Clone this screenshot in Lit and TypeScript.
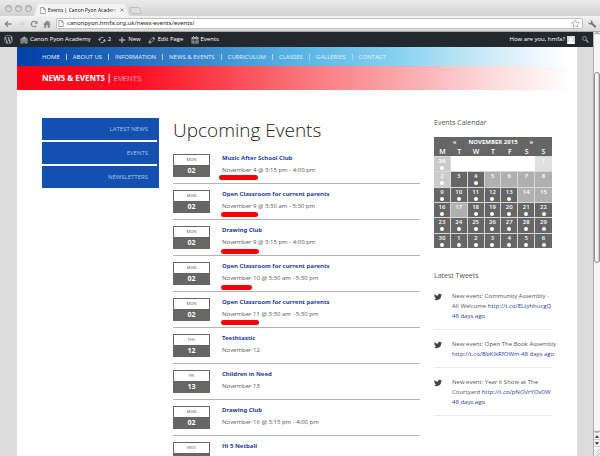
import { LitElement, html, css, svg } from "lit";
import { customElement } from "lit/decorators.js";
import { classMap } from "lit/directives/class-map.js";
import { styleMap } from "lit/directives/style-map.js";

interface Mark { x: number; y: number; w: number; }
interface EventItem { day: string; num?: string; title: string; when?: string; mark?: Mark; }

const NAV = ["HOME", "ABOUT US", "INFORMATION", "NEWS & EVENTS", "CURRICULUM", "CLASSES", "GALLERIES", "CONTACT"];
const SIDE = ["LATEST NEWS", "EVENTS", "NEWSLETTERS"];

const EVENTS: EventItem[] = [
  { day: "MON", num: "02", title: "Music After School Club", when: "November 4 @ 3:15 pm - 4:00 pm", mark: { x: 46, y: 27, w: 39 } },
  { day: "MON", num: "02", title: "Open Classroom for current parents", when: "November 9 @ 3:30 am - 5:30 pm", mark: { x: 48, y: 28, w: 37 } },
  { day: "MON", num: "02", title: "Drawing Club", when: "November 9 @ 3:15 pm - 4:00 pm", mark: { x: 48, y: 29, w: 38 } },
  { day: "MON", num: "02", title: "Open Classroom for current parents", when: "November 10 @ 3:30 am - 5:30 pm", mark: { x: 48, y: 29, w: 31 } },
  { day: "MON", num: "02", title: "Open Classroom for current parents", when: "November 11 @ 3:30 am - 5:30 pm", mark: { x: 48, y: 28, w: 38 } },
  { day: "THU", num: "12", title: "Teethtastic", when: "November 12" },
  { day: "FRI", num: "13", title: "Children in Need", when: "November 13" },
  { day: "MON", num: "02", title: "Drawing Club", when: "November 16 @ 3:15 pm - 4:00 pm" },
  { day: "WED", title: "Hi 5 Netball" },
];

// d: dark cell, m: mid grey, l: light grey, p: palest, w: blank; "*" marks a day with events
const WEEKS: string[][] = [
  ["26l*", "w", "w", "w", "w", "w", "1p"],
  ["2l*", "3d", "4d*", "5m", "6m", "7m", "8m"],
  ["9d*", "10d*", "11d*", "12d*", "13d*", "14m", "15m"],
  ["16d*", "17m", "18d*", "19d*", "20d*", "21d*", "22d*"],
  ["23d*", "24d*", "25d*", "26d*", "27d*", "28d*", "29d*"],
  ["30d*", "1d*", "2d*", "3d*", "4d*", "5d*", "6d*"],
];

const TWEETS = [
  { text: "New event: Community Assembly - All\u00a0Welcome", url: "http://t.co/ELtyhhucgQ" },
  { text: "New event: Open The Book Assembly", url: "http://t.co/BbKIkRfOWm" },
  { text: "New event: Year 6 Show at The Courtyard", url: "http://t.co/pNOVrYOv0W" },
];

const bird = svg`<path fill="currentColor" d="M23.954 4.569c-.885.389-1.83.654-2.825.775 1.014-.611 1.794-1.574 2.163-2.723-.951.555-2.005.959-3.127 1.184-.896-.959-2.173-1.559-3.591-1.559-2.717 0-4.92 2.203-4.92 4.917 0 .39.045.765.127 1.124C7.691 8.094 4.066 6.13 1.64 3.161c-.427.722-.666 1.561-.666 2.475 0 1.71.87 3.213 2.188 4.096-.807-.026-1.566-.248-2.228-.616v.061c0 2.385 1.693 4.374 3.946 4.827-.413.111-.849.171-1.296.171-.314 0-.615-.03-.916-.086.631 1.953 2.445 3.377 4.604 3.417-1.68 1.319-3.809 2.105-6.102 2.105-.39 0-.779-.023-1.17-.067 2.189 1.394 4.768 2.209 7.557 2.209 9.054 0 13.999-7.496 13.999-13.986 0-.209 0-.42-.015-.63.961-.689 1.8-1.56 2.46-2.548l-.047-.02z"/>`;
const wordpress = svg`<path fill="currentColor" d="M20 10c0-5.51-4.49-10-10-10C4.48 0 0 4.49 0 10c0 5.52 4.48 10 10 10 5.51 0 10-4.48 10-10zM7.78 15.37L4.37 6.22c.55-.02 1.17-.08 1.17-.08.5-.06.44-1.13-.06-1.11 0 0-1.45.11-2.37.11-.18 0-.37 0-.58-.01C4.12 2.69 6.87 1.11 10 1.11c2.33 0 4.45.87 6.05 2.34-.68-.11-1.65.39-1.65 1.58 0 .74.45 1.36.9 2.1.35.61.55 1.36.55 2.46 0 1.49-1.4 5-1.4 5l-3.03-8.37c.54-.02.82-.17.82-.17.5-.05.44-1.25-.06-1.22 0 0-1.44.12-2.38.12-.87 0-2.33-.12-2.33-.12-.5-.03-.56 1.2-.06 1.22l.92.08 1.26 3.41zM17.41 10c.24-.64.74-1.87.43-4.25.7 1.29 1.05 2.71 1.05 4.25 0 3.29-1.73 6.24-4.4 7.78.97-2.59 1.94-5.2 2.92-7.78zM6.1 18.09C3.12 16.65 1.11 13.53 1.11 10c0-1.3.23-2.48.72-3.59C3.25 10.3 4.67 14.2 6.1 18.09zm4.03-6.63l2.58 6.98c-.86.29-1.76.45-2.71.45-.79 0-1.57-.11-2.29-.33.81-2.38 1.62-4.74 2.42-7.1z"/>`;

@customElement("browser-chrome")
export class BrowserChrome extends LitElement {
  static styles = css`
    :host { display: block; font-family: "Open Sans", sans-serif; color: #444; }
    svg { display: block; flex: none; }
    .strip { display: flex; align-items: flex-end; height: 16px; background: linear-gradient(#eaeaea, #d2d2d2); padding-left: 5px; }
    .lights { display: flex; gap: 3px; align-self: center; }
    .light { width: 7px; height: 7px; padding: 0; border: 1px solid #a0a0a0; border-radius: 50%; background: linear-gradient(#c4c4c4, #e8e8e8); box-sizing: border-box; }
    .tab { display: flex; align-items: center; width: 95px; height: 12px; box-sizing: border-box; padding: 0 5px 0 6px; gap: 2px; margin-left: 2px; background: #f3f3f3; clip-path: polygon(4px 0, 91px 0, 95px 100%, 0 100%); }
    .title { flex: 1; min-width: 0; font-size: 5px; line-height: 8px; color: #111; white-space: nowrap; overflow: hidden; mask-image: linear-gradient(90deg, #000 88%, transparent); }
    .new { width: 11px; height: 7px; margin: 0 0 2px 1px; padding: 0; border: 1px solid #bdbdbd; border-radius: 2px; background: #dedede; transform: skewX(20deg); }
    .close { display: flex; padding: 0; border: 0; background: none; }
    .bar { display: flex; align-items: center; height: 16px; box-sizing: border-box; padding: 0 4px; background: linear-gradient(#f2f2f2, #d9d9d9); border-bottom: 1px solid #a8a8a8; }
    .tool { display: flex; padding: 0; border: 0; background: none; margin-right: 5px; }
    .address { flex: 1; min-width: 0; display: flex; align-items: center; gap: 3px; height: 11px; box-sizing: border-box; margin: 0 5px 0 0; padding: 0 2px 0 1px; background: #fff; border: 1px solid #c2c2c2; border-radius: 2px; }
    .url { flex: 1; min-width: 0; border: 0; outline: 0; padding: 0; height: 9px; background: none; font: 6px/9px "Noto Sans", sans-serif; color: #222; }
    .wrench { margin: 0; }
  `;
  render() {
    const page = html`<svg width="6" height="7" viewBox="0 0 12 14"><path d="M1.500 1h5.500l3.500 3.500v8.500h-9zM7 1v3.500h3.500" fill="#fff" stroke="#888" stroke-width="1.500"/></svg>`;
    return html`
      <div class="strip">
        <div class="lights">
          <button class="light" aria-label="Close window"></button><button class="light" aria-label="Minimise"></button><button class="light" aria-label="Zoom"></button>
        </div>
        <div class="tab">${page}<span class="title">Events | Canon Pyon Academ</span>
          <button class="close" aria-label="Close tab"><svg width="4" height="4" viewBox="0 0 8 8"><path d="M1 1l6 6M7 1l-6 6" stroke="#888" stroke-width="1.800"/></svg></button>
        </div>
        <button class="new" aria-label="New tab"></button>
      </div>
      <div class="bar">
        <button class="tool" aria-label="Back"><svg width="8" height="8" viewBox="0 0 16 16"><path d="M15 8H3M8 2.500L2.500 8 8 13.500" fill="none" stroke="#888" stroke-width="2.600"/></svg></button>
        <button class="tool" aria-label="Forward"><svg width="8" height="8" viewBox="0 0 16 16"><path d="M1 8h12M8 2.500L13.500 8 8 13.500" fill="none" stroke="#d4d4d4" stroke-width="2.600"/></svg></button>
        <button class="tool" aria-label="Reload"><svg width="8" height="8" viewBox="0 0 16 16"><path d="M12.500 11.500A5.500 5.500 0 1 1 12 4" fill="none" stroke="#888" stroke-width="2.400"/><path d="M15 1v6.500H8.500z" fill="#888"/></svg></button>
        <button class="tool" aria-label="Home"><svg width="8" height="8" viewBox="0 0 16 16"><path d="M8 1L0 9h2.500v6.500H6.500V10h3v5.500h4V9H16l-3-3V2h-2v2z" fill="#888"/></svg></button>
        <div class="address">${page}
          <input class="url" aria-label="Address" value="canonpyon.hmfa.org.uk/news-events/events/">
          <svg width="9" height="9" viewBox="0 0 18 18"><path d="M9 1.500l2.200 5.200 5.600.5-4.200 3.700 1.200 5.500L9 13.500l-4.800 2.900 1.200-5.500L1.200 7.200l5.600-.5z" fill="#fff" stroke="#999" stroke-width="1.400"/></svg>
        </div>
        <button class="tool wrench" aria-label="Settings"><svg width="8" height="8" viewBox="0 0 16 16"><path d="M4 0.500A5 5 0 0 1 9.500 6l6 5.500a2 2 0 0 1-3 3.200L6.500 9A5 5 0 0 1 .5 4l3 2.200L6 5.500 6.200 3z" fill="#777"/></svg></button>
      </div>`;
  }
}

@customElement("admin-bar")
export class AdminBar extends LitElement {
  static styles = css`
    :host { display: flex; align-items: center; height: 15px; padding: 0 4px 0 4px; background: #23282d; color: #fff; font: 6px/9px "Open Sans", sans-serif; }
    .item { display: flex; align-items: center; gap: 2px; margin-right: 7px; color: inherit; text-decoration: none; white-space: nowrap; }
    .item svg { display: block; color: #a0a5aa; }
    .user { margin-left: auto; }
    .item .avatar { width: 8px; height: 8px; background: #d8d8d8; }
    .search { display: flex; padding: 0; border: 0; background: none; }
  `;
  render() {
    return html`
      <a class="item" href="#" aria-label="WordPress"><svg width="9" height="9" viewBox="0 0 20 20">${wordpress}</svg></a>
      <a class="item" href="#"><svg width="8" height="8" viewBox="0 0 16 16"><path d="M1 5h3V3h3V1h3v2h3v2h2v10H1zM3 7v2h2V7zM7 7v2h2V7zM11 7v2h2V7zM3 11v2h2v-2zM7 11v4h2v-4zM11 11v2h2v-2z" fill="currentColor" fill-rule="evenodd"/></svg>Canon Pyon Academy</a>
      <a class="item" href="#"><svg width="8" height="8" viewBox="0 0 16 16"><path d="M3 10A5.200 5.200 0 0 1 11 3.800M13 6A5.200 5.200 0 0 1 5 12.200" fill="none" stroke="currentColor" stroke-width="2"/><path d="M0 8l3-4 3.500 4zM16 8l-3 4-3.500-4z" fill="currentColor"/></svg>2</a>
      <a class="item" href="#"><svg width="8" height="8" viewBox="0 0 16 16"><path d="M8 2v12M2 8h12" stroke="currentColor" stroke-width="2.600"/></svg>New</a>
      <a class="item" href="#"><svg width="8" height="8" viewBox="0 0 16 16"><path d="M10.500 1.500l4 4-8.500 8.500-5 1 1-5zM9 4.500L4 9.500l2.500 2.500 5-5z" fill="currentColor" fill-rule="evenodd"/></svg>Edit Page</a>
      <a class="item" href="#"><svg width="8" height="8" viewBox="0 0 16 16"><path d="M1 2h3V0h2v2h4V0h2v2h3v13H1zM3 6v7h10V6zM4 7h2v2H4zM7 7h2v2H7zM10 7h2v2h-2zM4 10h2v2H4zM7 10h2v2H7zM10 10h2v2h-2z" fill="currentColor" fill-rule="evenodd"/></svg>Events</a>
      <a class="item user" href="#">How are you, hmfa?<svg class="avatar" viewBox="0 0 16 16"><circle cx="8" cy="6" r="3.500" fill="#fff"/><path d="M1.500 16a6.500 6 0 0 1 13 0z" fill="#fff"/></svg></a>
      <button class="search" aria-label="Search"><svg width="7" height="7" viewBox="0 0 14 14"><circle cx="5" cy="5" r="3.800" fill="none" stroke="#a0a5aa" stroke-width="1.700"/><path d="M8 8l5 5" stroke="#a0a5aa" stroke-width="2.200"/></svg></button>`;
  }
}

@customElement("events-calendar")
export class EventsCalendar extends LitElement {
  static styles = css`
    :host { display: block; }
    .cal { width: 100%; height: 111px; table-layout: fixed; border-collapse: separate; border-spacing: 0; background: #666; color: #fff; font: 600 6px/7px "Open Sans", sans-serif; }
    th, td { padding: 0; text-align: center; }
    .month { height: 9px; padding-top: 1px; }
    .month a { color: #fff; text-decoration: none; }
    .bar { display: flex; justify-content: center; gap: 12px; }
    .dow { height: 9px; font-size: 7px; line-height: 9px; font-weight: 600; }
    .day { vertical-align: top; padding-top: 1px; border: 0 solid #d8d8d8; border-width: 1px 1px 0 0; }
    .day:last-child { border-right: 0; }
    .dot::after { content: ""; display: block; width: 4px; height: 4px; margin: 1px auto 0; border-radius: 50%; background: #fff; }
    .d { background: #666; } .m { background: #b0b0b0; } .l { background: #cbcbcb; } .p { background: #e0e0e0; }
    .w { background: #fff; border-color: #fff; }
  `;
  render() {
    return html`
      <table class="cal">
        <thead>
          <tr><th class="month" colspan="7"><div class="bar"><a href="#" aria-label="Previous month">«</a><span>NOVEMBER 2015</span><a href="#" aria-label="Next month">»</a></div></th></tr>
          <tr>${["M", "T", "W", "T", "F", "S", "S"].map(d => html`<th class="dow">${d}</th>`)}</tr>
        </thead>
        <tbody>
          ${WEEKS.map(week => html`<tr>${week.map(cell => {
            const tone = cell.replace(/[\d*]/g, "");
            return html`<td class=${classMap({ day: true, [tone]: true, dot: cell.endsWith("*") })}>${parseInt(cell, 10) || ""}</td>`;
          })}</tr>`)}
        </tbody>
      </table>`;
  }
}

@customElement("scroll-bar")
export class ScrollBar extends LitElement {
  static styles = css`
    :host { display: flex; flex-direction: column; flex: none; width: 7px; box-sizing: border-box; background: #f6f6f6; border-left: 1px solid #b0b0b0; }
    .above { flex: 38; border-top: 2px solid #b4b4b4; border-radius: 4px 4px 0 0; }
    .thumb { flex: 192; background: linear-gradient(90deg, #fdfdfd, #f2f2f2 60%, #c4c4c4); border: 1px solid #8e8e8e; border-radius: 3px; }
    .below { flex: 170; border-bottom: 2px solid #a8a8a8; border-radius: 0 0 4px 4px; }
    .arrow { display: flex; align-items: center; justify-content: center; height: 7px; padding: 0; border: 0; border-bottom: 1px solid #ccc; background: #f2f2f2; }
    .grip { display: block; height: 9px; background: repeating-linear-gradient(135deg, #eee 0 2px, #bbb 2px 3px); clip-path: polygon(100% 0, 100% 100%, 0 100%); }
  `;
  render() {
    return html`
      <div class="above"></div><div class="thumb"></div><div class="below"></div>
      <button class="arrow" aria-label="Scroll up"><svg width="4" height="3" viewBox="0 0 4 3"><path d="M2 0l2 3H0z" fill="#444"/></svg></button>
      <button class="arrow" aria-label="Scroll down"><svg width="4" height="3" viewBox="0 0 4 3"><path d="M2 3L0 0h4z" fill="#444"/></svg></button>
      <span class="grip"></span>`;
  }
}

@customElement("app-root")
export class AppRoot extends LitElement {
  static styles = css`
    :host { display: flex; flex-direction: column; height: 100vh; overflow: hidden; background: #dcdcdc; font: 6px/10px "Open Sans", sans-serif; color: #555; }
    a { color: #1d3f9c; text-decoration: none; }
    .window { flex: 1; min-height: 0; display: flex; }
    .view { flex: 1; min-width: 0; overflow: hidden; }
    .site { margin: 0 16px 0 17px; background: #fff; min-height: 100%; }
    .nav { display: flex; align-items: center; height: 19px; padding: 0 25px; background: linear-gradient(90deg, #003fa8, #3a86cc 32%, #52b0e2 48%, #86d2f0 68%, #cdebf8 84%, #fff 98%); }
    .nav a { color: #e6f0fa; white-space: nowrap; }
    .nav a + a::before { content: ""; display: inline-block; width: 1px; height: 6px; margin: 0 6px; background: #b9d3ee; vertical-align: -1px; }
    .banner { display: flex; align-items: center; height: 24px; padding: 0 25px; background: linear-gradient(90deg, #fb0017, #fc0a20 20%, #fa3a46 34%, #f9787e 52%, #faa6aa 68%, #fcd5d6 83%, #fff 99%); color: #fff; }
    .banner h1 { margin: 0; font-size: 8px; line-height: 12px; font-weight: 700; }
    .banner .here { font-weight: 300; }
    .cols { display: grid; grid-template-columns: 117fr 247fr 118fr; column-gap: 14px; align-items: start; padding: 28px 25px 0; }
    .side { display: flex; flex-direction: column; gap: 2px; background: linear-gradient(#fff, #fff) left / calc(100% - 2px) 100% no-repeat #1450b0; }
    .side a { height: 22px; line-height: 22px; padding-right: 11px; text-align: right; color: #a9c4ee; background: #1450b0; }
    .main h2 { margin: 0; font-size: 19px; line-height: 24px; font-weight: 300; color: #222; }
    .list { margin: 6px 0 0; padding: 0; list-style: none; }
    .event { position: relative; display: flex; gap: 12px; padding: 6px 0; border-bottom: 1px solid #b4b4b4; }
    .badge { flex: none; width: 37px; height: 23px; box-sizing: border-box; border: 1px solid #666; background: #666; text-align: center; }
    .dayname { display: block; height: 10px; font-size: 4px; line-height: 10px; background: #fff; }
    .daynum { display: block; font-size: 7px; line-height: 11px; font-weight: 700; color: #fff; }
    .event h3 { margin: 0; font: 700 6px/9px "Noto Sans", sans-serif; white-space: nowrap; }
    .event p { margin: 3px 0 0; line-height: 9px; }
    .mark { position: absolute; height: 5px; border-radius: 3px; background: #f90008; }
    .widget h2 { margin: 0; font-size: 7px; line-height: 10px; font-weight: 400; }
    .widget events-calendar { margin-top: 9px; }
    .tweets h2 { margin-top: 23px; }
    .feed { margin: 1px 0 0; padding: 0; list-style: none; }
    .tweet { display: flex; gap: 10px; padding: 9px 0 8px; border-bottom: 1px solid #ececec; }
    .tweet svg { flex: none; margin-top: 2px; color: #444; }
    .tweet p { flex: 1; margin: 0 -6px 0 0; }
  `;
  render() {
    return html`
      <browser-chrome></browser-chrome>
      <div class="window">
        <div class="view">
          <admin-bar></admin-bar>
          <div class="site">
            <nav class="nav">${NAV.map(n => html`<a href="#">${n}</a>`)}</nav>
            <header class="banner"><h1>NEWS &amp; EVENTS | <span class="here">EVENTS</span></h1></header>
            <div class="cols">
              <nav class="side">${SIDE.map(s => html`<a href="#">${s}</a>`)}</nav>
              <main class="main">
                <h2>Upcoming Events</h2>
                <ul class="list">
                  ${EVENTS.map(e => html`<li class="event">
                    <div class="badge"><span class="dayname">${e.day}</span>${e.num ? html`<span class="daynum">${e.num}</span>` : ""}</div>
                    <div><h3><a href="#">${e.title}</a></h3>${e.when ? html`<p>${e.when}</p>` : ""}</div>
                    ${e.mark ? html`<span class="mark" style=${styleMap({ left: `${e.mark.x}px`, top: `${e.mark.y}px`, width: `${e.mark.w}px` })}></span>` : ""}
                  </li>`)}
                </ul>
              </main>
              <aside class="widgets">
                <section class="widget"><h2>Events Calendar</h2><events-calendar></events-calendar></section>
                <section class="widget tweets"><h2>Latest Tweets</h2>
                  <ul class="feed">${TWEETS.map(t => html`<li class="tweet">
                    <svg width="8" height="8" viewBox="0 0 24 24">${bird}</svg>
                    <p>${t.text} <a href="#">${t.url}</a> <a href="#">48&nbsp;days&nbsp;ago</a></p>
                  </li>`)}</ul>
                </section>
              </aside>
            </div>
          </div>
        </div>
        <scroll-bar></scroll-bar>
      </div>`;
  }
}
